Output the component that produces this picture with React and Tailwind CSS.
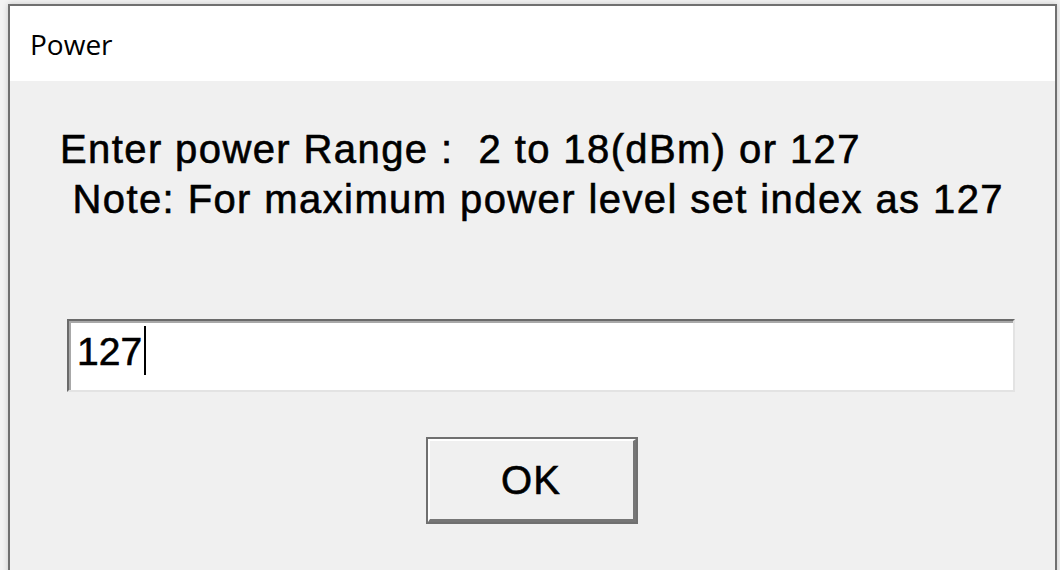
export default function App() {
  return (
    <div className="w-[1060px] h-[570px] overflow-hidden bg-[#f3f3f3] pt-[4px] pl-[8px]">
      <div className="w-[1049px] h-[600px] border-2 border-b-0 border-[#707070] flex flex-col shadow-[0_0_6px_rgba(0,0,0,0.18)]">
        <div
          className="h-[75px] bg-white flex items-center pl-[20px] text-[28px] text-black"
          style={{ fontFamily: '"Open Sans", "Noto Sans", sans-serif' }}
        >
          Power
        </div>
        <div
          className="flex-1 bg-[#f0f0f0] flex flex-col pt-[43px] text-black [-webkit-text-stroke:0.6px_#000]"
          style={{ fontFamily: '"Liberation Sans", Arial, sans-serif' }}
        >
          <div className="pl-[50px] text-[40px] leading-[50px] tracking-[1.4px] whitespace-pre">
            <div>Enter power Range :  2 to 18(dBm) or 127</div>
            <div> Note: For maximum power level set index as 127</div>
          </div>
          <div className="mt-[95px] ml-[57px] w-[948px] h-[73px] bg-white border-t-2 border-l-2 border-t-[#6a6a6a] border-l-[#6a6a6a] border-b-2 border-r-2 border-b-[#e3e3e3] border-r-[#e3e3e3] shadow-[inset_2px_2px_0_#a8a8a8] pl-[8px] pt-[11px] flex items-start">
            <span className="text-[39px] leading-[40px]">127</span>
            <span className="ml-[2px] mt-[-6px] w-[2px] h-[49px] bg-black" />
          </div>
          <div className="mt-[45px] flex justify-center">
            <div className="w-[212px] h-[87px] border-2 border-[#707070] flex -translate-x-[1px]">
              <div className="flex-1 bg-[#f0f0f0] border-t-2 border-l-2 border-t-white border-l-white border-b-[3px] border-r-[3px] border-b-[#767676] border-r-[#767676] flex items-center justify-center text-[40px] leading-[40px] tracking-[1px]">
                OK
              </div>
            </div>
          </div>
        </div>
      </div>
    </div>
  );
}
